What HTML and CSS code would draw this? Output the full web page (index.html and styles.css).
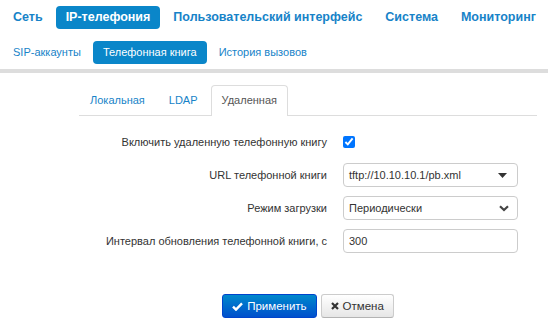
FILE: index.html
```html
<!DOCTYPE html>
<html lang="ru">

<head>
    <meta charset="UTF-8">
    <meta name="viewport" content="width=device-width, initial-scale=1.0">
    <title>Телефонная книга</title>
    <link rel="stylesheet" href="styles.css">
</head>

<body>

    <header class="header">
        <nav class="menu menu-main">
            <a class="menu-item">Сеть</a>
            <a class="menu-item active">IP-телефония</a>
            <a class="menu-item">Пользовательский интерфейс</a>
            <a class="menu-item">Система</a>
            <a class="menu-item">Мониторинг</a>
        </nav>
        <nav class="menu menu-sub">
            <a class="menu-item">SIP-аккаунты</a>
            <a class="menu-item active">Телефонная книга</a>
            <a class="menu-item">История вызовов</a>
        </nav>
    </header>

    <div class="divider"></div>

    <main class="content">
        <ul class="tabs">
            <li class="tab">Локальная</li>
            <li class="tab">LDAP</li>
            <li class="tab active">Удаленная</li>
        </ul>

        <form class="form">
            <label class="label">Включить удаленную телефонную книгу</label>
            <div class="control">
                <input type="checkbox" class="check" checked>
            </div>

            <label class="label">URL телефонной книги</label>
            <div class="control">
                <div class="field">
                    <span>tftp://10.10.10.1/pb.xml</span>
                    <svg class="caret" width="9" height="5" viewBox="0 0 9 5"><path d="M0 0h9L4.5 5z" fill="#333"/></svg>
                </div>
            </div>

            <label class="label">Режим загрузки</label>
            <div class="control">
                <div class="field">
                    <span>Периодически</span>
                    <svg class="chevron" width="10" height="7" viewBox="0 0 10 7"><path d="M1 1.2l4 3.8 4-3.8" fill="none" stroke="#444" stroke-width="2.2"/></svg>
                </div>
            </div>

            <label class="label">Интервал обновления телефонной книги, с</label>
            <div class="control">
                <div class="field">
                    <span>300</span>
                </div>
            </div>
        </form>

        <div class="actions">
            <button class="btn btn-primary" type="button">
                <svg width="11" height="9" viewBox="0 0 11 9"><path d="M1 4.6l3 3 6-6.2" fill="none" stroke="#fff" stroke-width="2.4"/></svg>
                Применить
            </button>
            <button class="btn" type="button">
                <svg width="8" height="8" viewBox="0 0 8 8"><path d="M1 1l6 6M7 1L1 7" fill="none" stroke="#333" stroke-width="2.2"/></svg>
                Отмена
            </button>
        </div>
    </main>

</body>

</html>
```

FILE: styles.css
```css
* {
    padding: 0;
    margin: 0;
    box-sizing: border-box;
}

body {
    background-color: #ffffff;
    font-family: "Liberation Sans", Arial, sans-serif;
    color: #333333;
    font-size: 11px;
}

.header {
    padding: 6px 0 0 3px;
}

.menu {
    display: flex;
    gap: 2px;
    white-space: nowrap;
}

.menu-item {
    display: block;
    padding: 0 10px;
    color: #1783c8;
    border-radius: 4px;
    cursor: pointer;
}

.menu-item.active {
    background-color: #0a86c9;
    color: #ffffff;
}

.menu-main {
    gap: 3px;
}

.menu-main .menu-item {
    font-size: 12.5px;
    font-weight: bold;
    line-height: 23px;
}

.menu-sub {
    margin-top: 12px;
}

.menu-sub .menu-item {
    font-size: 11px;
    line-height: 23px;
}

.divider {
    height: 4px;
    background-color: #dddddd;
    margin: 5px 5px 0 0;
}

.content {
    margin-left: 79px;
    width: 458px;
}

.tabs {
    list-style: none;
    display: flex;
    gap: 2px;
    margin-top: 12px;
    border-bottom: 1px solid #dddddd;
}

.tab {
    padding: 0 10px;
    line-height: 29px;
    font-size: 11px;
    color: #1783c8;
    border: 1px solid transparent;
    border-bottom: none;
    border-radius: 4px 4px 0 0;
    margin-bottom: -1px;
    cursor: pointer;
}

.tab.active {
    color: #555555;
    background-color: #ffffff;
    border-color: #dddddd;
    height: 31px;
}

.form {
    display: grid;
    grid-template-columns: 248px 175px;
    column-gap: 16px;
    row-gap: 9px;
    grid-auto-rows: 24px;
    padding-top: 14px;
}

.label {
    text-align: right;
    line-height: 24px;
    color: #333333;
}

.control {
    display: flex;
    align-items: center;
}

.check {
    width: 12px;
    height: 12px;
    margin: 0;
}

.field {
    width: 100%;
    height: 24px;
    border: 1px solid #cccccc;
    border-radius: 4px;
    padding: 0 8px 0 5px;
    display: flex;
    align-items: center;
    justify-content: space-between;
    color: #333333;
    background-color: #ffffff;
}

.caret {
    margin-right: 2px;
}

.actions {
    display: flex;
    justify-content: center;
    gap: 4px;
    margin-top: 41px;
}

.btn {
    display: flex;
    align-items: center;
    gap: 4px;
    height: 24px;
    padding: 0 9px;
    font-family: "Liberation Sans", Arial, sans-serif;
    font-size: 11.5px;
    color: #333333;
    border: 1px solid #cccccc;
    border-bottom-color: #b3b3b3;
    border-radius: 3px;
    background-image: linear-gradient(#ffffff, #e6e6e6);
    cursor: pointer;
}

.btn-primary {
    color: #ffffff;
    border-color: #0044cc;
    background-image: linear-gradient(#0088cc, #0050cc);
}
```
